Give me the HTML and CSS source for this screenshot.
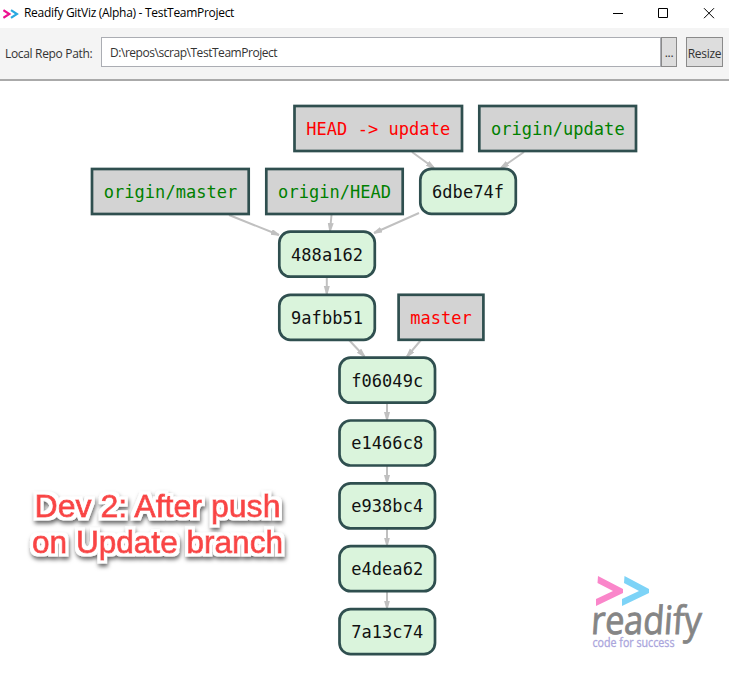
FILE: index.html
```html
<!DOCTYPE html>
<html lang="en">
<head>
<meta charset="utf-8">
<title>Readify GitViz (Alpha) - TestTeamProject</title>
<link rel="stylesheet" href="styles.css">
</head>
<body>
<header class="titlebar">
  <svg class="app-icon" width="16" height="10" viewBox="0 0 16 10"><path d="M.4 1.200 6.300 5 .4 8.800" stroke="#ed1290"/><path d="M8 1.200 13.900 5 8 8.800" stroke="#29a8e0"/></svg>
  <span class="title">Readify GitViz (Alpha) - TestTeamProject</span>
  <svg class="controls" width="110" height="28" viewBox="0 0 110 28"><path d="M-6 13.5H4M39.5 8.5h9v9h-9zM85 8.200l10 10M95 8.200l-10 10"/></svg>
</header>
<div class="toolbar">
  <label class="label" for="path">Local Repo Path:</label>
  <div class="field"><div class="path" id="path">D:\repos\scrap\TestTeamProject</div><button class="browse">...</button></div>
  <button class="resize"><span>Resize</span></button>
</div>
<main>
<svg class="graph" width="729" height="594" viewBox="0 81 729 594">
  <defs>
    <marker id="arrow" markerUnits="userSpaceOnUse" markerWidth="9" markerHeight="8" refX="8" refY="3" orient="auto"><path d="M0 0 8 2.200V3.800L0 6z"/></marker>
    <filter id="halo" x="-10%" y="-20%" width="120%" height="150%">
      <feMorphology in="SourceAlpha" operator="dilate" radius="3" result="spread"/>
      <feGaussianBlur in="spread" stdDeviation=".7" result="soft"/>
      <feFlood flood-color="#fff"/>
      <feComposite in2="soft" operator="in" result="outline"/>
      <feDropShadow in="outline" dx="1" dy="3" stdDeviation="2" flood-color="#000" flood-opacity=".6" result="backing"/>
      <feMerge><feMergeNode in="backing"/><feMergeNode in="SourceGraphic"/></feMerge>
    </filter>
  </defs>
  <g class="edges">
    <path d="M412 152 434 168"/><path d="M524 152 501 168"/><path d="M229 215 279 235"/><path d="M331.500 215 330 231"/><path d="M419 213 374 233"/>
    <path d="M326.800 278V294"/><path d="M349 340 364.500 356.500"/><path d="M421 340 407 356.500"/>
    <path d="M387 403V420"/><path d="M387 466V483"/><path d="M387 529V545.500"/><path d="M387 592V608.500"/>
  </g>
  <g class="refs">
    <rect x="294.500" y="106" width="167.500" height="45"/><rect x="479.300" y="106" width="156.700" height="45"/>
    <rect x="92" y="169" width="156.700" height="45"/><rect x="266.300" y="169" width="136.400" height="45"/>
    <rect x="398.600" y="294.800" width="84.800" height="45"/>
  </g>
  <g class="commits">
    <rect x="420.300" y="168.800" width="95.500" height="45" rx="11"/>
    <rect x="279.300" y="231.700" width="95.500" height="45" rx="11"/>
    <rect x="279.300" y="294.800" width="95.500" height="45" rx="11"/>
    <rect x="339.500" y="357.700" width="95.500" height="45" rx="11"/>
    <rect x="339.500" y="420.500" width="95.500" height="45" rx="11"/>
    <rect x="339.500" y="483.400" width="95.500" height="45" rx="11"/>
    <rect x="339.500" y="546.200" width="95.500" height="45" rx="11"/>
    <rect x="339.500" y="609.100" width="95.500" height="45" rx="11"/>
  </g>
  <g class="names">
    <text class="local" x="378.200" y="134.500" textLength="144">HEAD -&gt; update</text>
    <text class="remote" x="557.800" y="134.500" textLength="133.700">origin/update</text>
    <text class="remote" x="170.500" y="197.500" textLength="133.700">origin/master</text>
    <text class="remote" x="334.600" y="197.500" textLength="113">origin/HEAD</text>
    <text class="local" x="441" y="323.500" textLength="61.700">master</text>
    <text x="468" y="197.500" textLength="72">6dbe74f</text>
    <text x="327" y="260.500" textLength="72">488a162</text>
    <text x="327" y="323.500" textLength="72">9afbb51</text>
    <text x="387.200" y="386.500" textLength="72">f06049c</text>
    <text x="387.200" y="449.200" textLength="72">e1466c8</text>
    <text x="387.200" y="512" textLength="72">e938bc4</text>
    <text x="387.200" y="575" textLength="72">e4dea62</text>
    <text x="387.200" y="638" textLength="72">7a13c74</text>
  </g>
  <g class="callout" filter="url(#halo)">
    <text x="34.500" y="516.500" textLength="246" lengthAdjust="spacingAndGlyphs">Dev 2: After push</text>
    <text x="32" y="552.500" textLength="251" lengthAdjust="spacingAndGlyphs">on Update branch</text>
  </g>
  <g class="logo">
    <path fill="#fa86ca" d="M598 576 623 589V593L596 606V599L613 591 597.500 583z"/>
    <path fill="#7dd3f7" d="M624.500 576 649 589V593L622 606V599L639 591 624 583z"/>
    <text class="brand" transform="translate(590.500 633.500) skewX(-4)" textLength="110" lengthAdjust="spacingAndGlyphs">readify</text>
    <text class="tagline" x="592.500" y="647" textLength="82" lengthAdjust="spacingAndGlyphs">code for success</text>
  </g>
</svg>
</main>
</body>
</html>
```
FILE: styles.css
```css
* { box-sizing: border-box; }
body { margin: 0; width: 729px; height: 675px; overflow: hidden; background: #fff; font: 12px "Open Sans", sans-serif; color: #333; }
.titlebar { display: flex; align-items: center; height: 28px; padding-left: 3px; }
.app-icon { fill: none; stroke-width: 2.2; margin-right: 5px; }
.title { color: #000; letter-spacing: -.3px; line-height: 26px; height: 28px; white-space: nowrap; }
.controls { margin-left: auto; overflow: visible; fill: none; stroke: #000; stroke-width: 1; }
.toolbar { display: flex; align-items: center; height: 53px; padding: 0 6px 3px 5px; background: #f4f4f4; border-bottom: 2px solid #aaa; }
.label { width: 96px; padding-top: 2px; letter-spacing: -.33px; white-space: nowrap; }
.field { display: flex; width: 576px; height: 30px; margin-right: 9px; }
.path { flex: 1; padding: 0 8px; border: 1px solid #abadb3; background: #fff; line-height: 29px; letter-spacing: -.46px; }
button { height: 30px; padding: 0; border: 1px solid #8a8a8a; background: #ddd; color: #333; font: inherit; letter-spacing: -.3px; }
.browse { width: 16px; }
.resize { width: 37px; padding-top: 2px; }
.graph { display: block; }
.edges { fill: none; stroke: #c0c0c0; stroke-width: 2; }
.edges path { marker-end: url(#arrow); }
marker path { fill: #c0c0c0; stroke: none; }
.refs rect { fill: #d3d3d3; stroke: #2f4f4f; stroke-width: 2.7; }
.commits rect { fill: #daf4dc; stroke: #2f4f4f; stroke-width: 2.7; }
.names { font: 17px "DejaVu Sans Mono", monospace; text-anchor: middle; fill: #111; }
.names .local { fill: #f00; }
.names .remote { fill: #008000; }
.callout { font: 31px "Liberation Sans", sans-serif; fill: #f94444; stroke: #f94444; stroke-width: .8; }
.brand { font: 39px "Open Sans", sans-serif; fill: #858585; stroke: #858585; stroke-width: .9; }
.tagline { font: 12px "Open Sans", sans-serif; fill: #aaa5dc; stroke: #aaa5dc; stroke-width: .3; }
```
